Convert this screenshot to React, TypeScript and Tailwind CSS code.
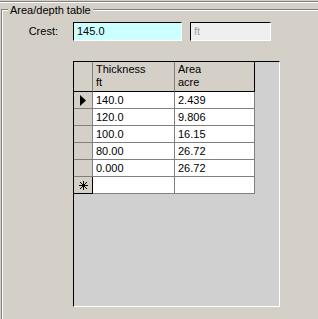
const rows = [
  { thickness: '140.0', area: '2.439', current: true },
  { thickness: '120.0', area: '9.806' },
  { thickness: '100.0', area: '16.15' },
  { thickness: '80.00', area: '26.72' },
  { thickness: '0.000', area: '26.72' },
];

const Arrow = () => (
  <svg width="6" height="11" viewBox="0 0 6 11">
    <polygon points="0,0 6,5.5 0,11" fill="#000" />
  </svg>
);

const Star = () => (
  <svg width="9" height="9" viewBox="0 0 9 9" stroke="#000" strokeWidth="1" shapeRendering="crispEdges">
    <line x1="0" y1="4.5" x2="9" y2="4.5" />
    <line x1="4.5" y1="0" x2="4.5" y2="9" />
    <line x1="1" y1="1" x2="8" y2="8" />
    <line x1="8" y1="1" x2="1" y2="8" />
  </svg>
);

export default function App() {
  return (
    <div className="w-[318px] h-[319px] overflow-hidden bg-[#d4d0c8] font-['Liberation_Sans',Arial,sans-serif] text-[11px] leading-[13px] text-black">
      <div className="mt-[1px] border-t border-t-[#808080] border-b border-b-white" />
      <div className="relative ml-[1px] mt-[6px] h-[320px] border-l border-t border-[#808080]">
        <div className="h-full border-l border-t border-white">
          <span className="absolute top-[-6px] left-[6px] bg-[#d4d0c8] px-[2px]">Area/depth table</span>

          <div className="mt-[11px] flex items-center">
            <span className="w-[55px] text-right">Crest:</span>
            <div className="ml-[15px] flex h-[19px] w-[109px] items-center border border-t-black border-l-black border-b-white border-r-white bg-[#ccffff] pl-[3px]">
              145.0
            </div>
            <div className="ml-[8px] flex h-[19px] w-[81px] items-center border border-t-black border-l-black border-b-white border-r-white bg-[#efefef] pl-[3px] text-[#a0a0a0]">
              ft
            </div>
          </div>

          <div className="ml-[70px] mt-[20px] h-[246px] w-[207px] border border-t-black border-l-black border-b-white border-r-white bg-[#d0d0d0]">
            <div className="flex h-[30px]">
              <div className="w-[19px] border-r border-r-[#808080] border-b border-b-black bg-[#d4d0c8]" />
              <div className="w-[82px] border-r border-r-[#808080] border-b border-b-black bg-[#d4d0c8] pl-[3px] pt-[1px]">
                <div>Thickness</div>
                <div>ft</div>
              </div>
              <div className="w-[80px] border-r border-r-black border-b border-b-black bg-[#d4d0c8] pl-[3px] pt-[1px]">
                <div>Area</div>
                <div>acre</div>
              </div>
            </div>

            {rows.map((r) => (
              <div key={r.thickness} className="flex h-[17px]">
                <div className="flex w-[19px] items-center border-r border-b border-[#808080] bg-[#d4d0c8] pl-[6px]">
                  {r.current && <Arrow />}
                </div>
                <div className="flex w-[82px] items-center border-r border-b border-[#808080] bg-white pl-[3px]">
                  {r.thickness}
                </div>
                <div className="flex w-[80px] items-center border-r border-b border-[#808080] bg-white pl-[3px]">
                  {r.area}
                </div>
              </div>
            ))}

            <div className="flex h-[17px]">
              <div className="flex w-[19px] items-center border-r border-b border-black bg-[#d4d0c8] pl-[5px]">
                <Star />
              </div>
              <div className="w-[82px] border-r border-b border-[#808080] bg-white" />
              <div className="w-[80px] border-r border-b border-[#808080] bg-white" />
            </div>
          </div>
        </div>
      </div>
    </div>
  );
}
